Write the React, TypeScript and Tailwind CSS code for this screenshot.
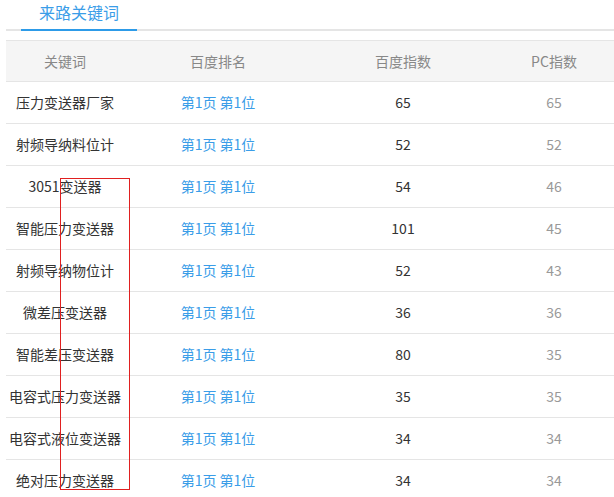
import React from "react";

const rows: [string, string, string][] = [
  ["压力变送器厂家", "65", "65"],
  ["射频导纳料位计", "52", "52"],
  ["3051变送器", "54", "46"],
  ["智能压力变送器", "101", "45"],
  ["射频导纳物位计", "52", "43"],
  ["微差压变送器", "36", "36"],
  ["智能差压变送器", "80", "35"],
  ["电容式压力变送器", "35", "35"],
  ["电容式液位变送器", "34", "34"],
  ["绝对压力变送器", "34", "34"],
];

export default function App() {
  return (
    <div className="relative w-[614px] h-[497px] overflow-hidden bg-white text-[14px]" style={{ fontFamily: '"Noto Sans CJK SC", "Noto Sans", sans-serif' }}>
      <div className="ml-[6px] h-[31px] border-b-[2px] border-[#e5e5e5] flex">
        <div className="ml-[15px] w-[116px] -mb-[2px] border-b-[2px] border-[#2d9be8] text-center text-[16px] text-[#3a9de8] leading-[24px]">来路关键词</div>
      </div>
      <div className="ml-[6px] mt-[9px]">
        <div className="grid grid-cols-[118px_188px_182px_120px] h-[42px] items-center bg-[#f5f5f5] border-y border-[#e5e5e5] text-[#888] text-center">
          <div>关键词</div><div>百度排名</div><div>百度指数</div><div>PC指数</div>
        </div>
        {rows.map((r, i) => (
          <div key={i} className="grid grid-cols-[118px_188px_182px_120px] h-[42px] items-center border-b border-[#e5e5e5] text-center">
            <div className="text-[#333] whitespace-nowrap">{r[0]}</div>
            <div className="text-[#3a9de8]">第1页 第1位</div>
            <div className="text-[#333]">{r[1]}</div>
            <div className="text-[#999]">{r[2]}</div>
          </div>
        ))}
      </div>
      <div className="absolute left-[60px] top-[178px] w-[70px] h-[312px] border border-[#e02020]" />
    </div>
  );
}
